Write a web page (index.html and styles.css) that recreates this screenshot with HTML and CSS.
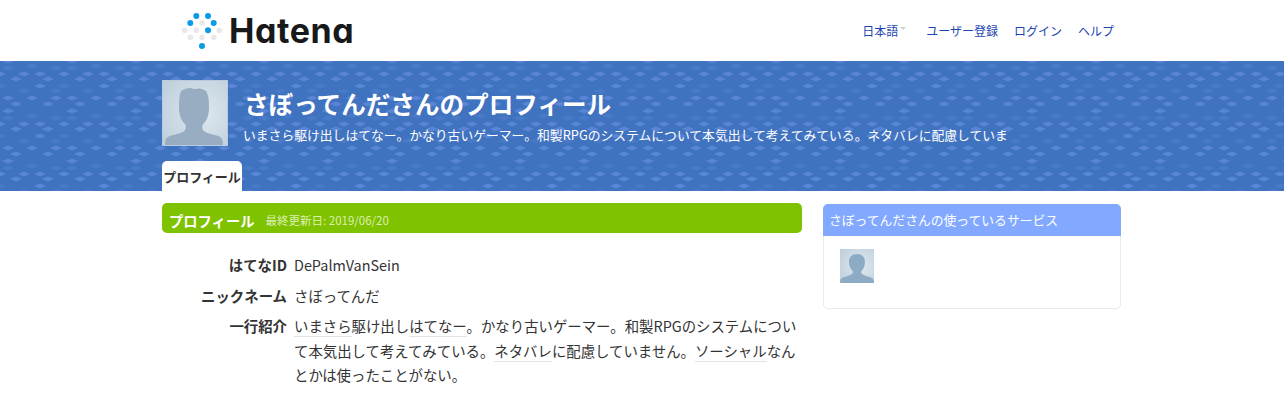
FILE: index.html
```html
<!DOCTYPE html>
<html lang="ja">
<head>
    <meta charset="UTF-8">
    <title>さぼってんださんのプロフィール</title>
    <link rel="stylesheet" href="styles.css">
</head>
<body>
    <div class="top">
        <div class="top-inner">
            <a class="logo" href="#">
                <svg width="40" height="36" viewBox="0 0 40 36">
                    <g fill="#e6e8ea">
                        <circle cx="20" cy="10" r="2.800"/><circle cx="2.700" cy="17.300" r="2.800"/><circle cx="14.300" cy="17.300" r="2.800"/>
                        <circle cx="37.300" cy="17.300" r="2.800"/><circle cx="8.300" cy="24.300" r="2.800"/><circle cx="20" cy="24.300" r="2.800"/>
                        <circle cx="31.700" cy="24.300" r="2.800"/>
                    </g>
                    <g fill="#0a9be4">
                        <circle cx="14.300" cy="3" r="3"/><circle cx="26" cy="3" r="3"/><circle cx="8.300" cy="10" r="3"/>
                        <circle cx="31.700" cy="10" r="3"/><circle cx="26" cy="17.300" r="3"/><circle cx="20" cy="33" r="3"/>
                    </g>
                </svg>
                <span class="logo-text">Hatena</span>
            </a>
            <nav class="nav">
                <a href="#" class="lang">日本語<i class="caret"></i></a>
                <a href="#">ユーザー登録</a>
                <a href="#">ログイン</a>
                <a href="#">ヘルプ</a>
            </nav>
        </div>
    </div>

    <div class="banner">
        <div class="wrap">
            <div class="banner-main">
                <svg class="avatar" viewBox="0 0 64 64">
                    <defs>
                        <radialGradient id="bg1" cx="0.6" cy="0.5" r="0.7">
                            <stop offset="0" stop-color="#dfe9f0"/>
                            <stop offset="1" stop-color="#bfd0dd"/>
                        </radialGradient>
                    </defs>
                    <rect width="64" height="64" fill="url(#bg1)"/>
                    <path d="M2 64c0-5 1-8 5-9 6-2 13-3 15-6 1-2 1-4 0-6-4-3-6-10-6-16 0-6 0-12 2-17 3-2 6-3 10-3 2 1 3 1 5 1 2-1 6-1 10 2 3 5 3 11 3 17 0 6-2 13-6 16-1 3-1 4 0 6 2 3 9 4 15 6 4 1 5 4 5 9z" fill="#98adc1"/>
                </svg>
                <div class="banner-text">
                    <h1>さぼってんださんのプロフィール</h1>
                    <p>いまさら駆け出しはてなー。かなり古いゲーマー。和製RPGのシステムについて本気出して考えてみている。ネタバレに配慮していま</p>
                </div>
            </div>
            <div class="tab">プロフィール</div>
        </div>
    </div>

    <div class="wrap content">
        <div class="main">
            <div class="section-title">
                <h2>プロフィール</h2>
                <span class="updated">最終更新日: 2019/06/20</span>
            </div>
            <dl class="info">
                <div class="row">
                    <dt>はてなID</dt>
                    <dd>DePalmVanSein</dd>
                </div>
                <div class="row">
                    <dt>ニックネーム</dt>
                    <dd>さぼってんだ</dd>
                </div>
                <div class="row">
                    <dt>一行紹介</dt>
                    <dd><span class="kw">いまさら</span>駆け出し<span class="kw">はてなー</span>。かなり古いゲーマー。和製RPGのシステムについて本気出して考えてみている。<span class="kw">ネタバレ</span>に配慮していません。<span class="kw">ソーシャル</span>なんとかは使ったことがない。</dd>
                </div>
            </dl>
        </div>
        <div class="side">
            <div class="side-title">さぼってんださんの使っているサービス</div>
            <div class="side-body">
                <svg class="service" viewBox="0 0 34 34">
                    <defs>
                        <radialGradient id="bg2" cx="0.6" cy="0.5" r="0.7">
                            <stop offset="0" stop-color="#dfe9f0"/>
                            <stop offset="1" stop-color="#bfd0dd"/>
                        </radialGradient>
                    </defs>
                    <rect width="34" height="34" fill="url(#bg2)"/>
                    <path d="M0 34c0-3 1-5 3-5.500 3-1 7-2 9-3.500 1-1 1-2 .5-3-2-2-3.500-5-3.500-9 0-5 3-8 8-8s8 3 8 8c0 4-1.500 7-3.500 9-.5 1-.5 2 .5 3 2 1.500 6 2.500 9 3.500 2 .5 3 2.500 3 5.500z" fill="#8eabc6"/>
                </svg>
            </div>
        </div>
    </div>
</body>
</html>
```

FILE: styles.css
```css
* {
    box-sizing: border-box;
}
html, body {
    height: 412px;
    overflow: hidden;
}
body {
    margin: 0;
    background-color: #fff;
    color: #333;
    font-family: "Noto Sans CJK JP", "Noto Sans", sans-serif;
    font-size: 14.4px;
}
a {
    text-decoration: none;
}
.top {
    height: 61px;
    background-color: #fff;
}
.top-inner {
    width: 960px;
    height: 61px;
    margin: 0 auto;
    display: flex;
    justify-content: space-between;
    align-items: center;
}
.logo {
    display: flex;
    align-items: center;
    gap: 7px;
    margin-left: 20px;
}
.logo svg {
    overflow: visible;
}
.logo-text {
    font-family: Inter, sans-serif;
    font-feature-settings: "cv11";
    font-size: 34px;
    font-weight: 700;
    line-height: 1;
    letter-spacing: 0.6px;
    color: #18191b;
}
.nav {
    display: flex;
    gap: 16px;
    margin-right: 8px;
    font-size: 12px;
}
.nav a {
    color: #1c45b0;
}
.lang {
    position: relative;
    padding-right: 12px;
}
.caret {
    position: absolute;
    top: 5px;
    right: 4px;
    border-top: 3px solid #d0d0d0;
    border-left: 3px solid transparent;
    border-right: 3px solid transparent;
}
.banner {
    height: 130px;
    background-color: #3f72bf;
    background-image: url("data:image/svg+xml,%3Csvg xmlns='http://www.w3.org/2000/svg' width='64' height='50'%3E%3Cdefs%3E%3Cpath id='d' d='M-6 0L0-2.500 6 0 0 2.500z'/%3E%3C/defs%3E%3Cg fill='%23487ac8'%3E%3Cuse href='%23d' x='8' y='7'/%3E%3Cuse href='%23d' x='32' y='5'/%3E%3Cuse href='%23d' x='56' y='7'/%3E%3Cuse href='%23d' x='0' y='25'/%3E%3Cuse href='%23d' x='64' y='25'/%3E%3Cuse href='%23d' x='24' y='30'/%3E%3Cuse href='%23d' x='56' y='30'/%3E%3C/g%3E%3Cg fill='%235a85d6'%3E%3Cuse href='%23d' x='0' y='13'/%3E%3Cuse href='%23d' x='64' y='13'/%3E%3Cuse href='%23d' x='24' y='13'/%3E%3Cuse href='%23d' x='40' y='13'/%3E%3Cuse href='%23d' x='16' y='18'/%3E%3Cuse href='%23d' x='48' y='18'/%3E%3Cuse href='%23d' x='40' y='25'/%3E%3Cuse href='%23d' x='8' y='37'/%3E%3Cuse href='%23d' x='32' y='37'/%3E%3Cuse href='%23d' x='56' y='37'/%3E%3Cuse href='%23d' x='16' y='43'/%3E%3Cuse href='%23d' x='48' y='43'/%3E%3Cuse href='%23d' x='8' y='0'/%3E%3Cuse href='%23d' x='8' y='50'/%3E%3C/g%3E%3C/svg%3E");
}
.wrap {
    width: 960px;
    margin: 0 auto;
}
.banner-main {
    display: flex;
    padding-top: 19px;
    height: 100px;
}
.avatar {
    width: 66px;
    height: 66px;
    border: 1px solid #b9cbdc;
    flex-shrink: 0;
}
.banner-text {
    margin-left: 15px;
    color: #fff;
    min-width: 0;
    white-space: nowrap;
}
.banner-text h1 {
    margin: 5px 0 0 1px;
    font-size: 24.6px;
    font-weight: 700;
    line-height: 36px;
}
.banner-text p {
    margin: 4px 0 0;
    font-size: 12.8px;
    line-height: 20px;
}
.tab {
    width: 80px;
    height: 30px;
    background-color: #fff;
    border-radius: 5px 5px 0 0;
    color: #333;
    font-size: 13px;
    font-weight: 700;
    line-height: 32px;
    text-align: center;
    white-space: nowrap;
}
.content {
    display: flex;
    align-items: flex-start;
    gap: 21px;
    padding-top: 12px;
}
.main {
    width: 640px;
}
.section-title {
    height: 30px;
    background-color: #7fc200;
    border-radius: 5px;
    color: #fff;
    display: flex;
    align-items: center;
    padding: 4px 0 0 7px;
}
.section-title h2 {
    margin: 0;
    font-size: 14.3px;
    font-weight: 700;
}
.updated {
    margin-left: 11px;
    font-size: 11.500px;
    color: #dcefb3;
}
.info {
    margin: 20px 0 0;
}
.row {
    display: flex;
    margin-bottom: 6px;
}
.row dt {
    width: 125px;
    font-weight: 700;
    text-align: right;
    line-height: 24.500px;
}
.row dd {
    margin: 0 0 0 7px;
    width: 504px;
    line-height: 24.500px;
}
.kw {
    border-bottom: 1px solid #e2e2e2;
}
.side {
    width: 298px;
    margin-top: 1px;
    border-radius: 5px;
    border: 1px solid #eaeaea;
    border-top: none;
}
.side-title {
    height: 32px;
    margin: 0 -1px;
    background-color: #82a9ff;
    border-radius: 5px 5px 0 0;
    color: #fff;
    font-size: 12.8px;
    line-height: 32px;
    padding-left: 6px;
    white-space: nowrap;
}
.side-body {
    height: 72px;
    padding: 13px 16px;
}
.service {
    display: block;
    width: 34px;
    height: 34px;
}
```
